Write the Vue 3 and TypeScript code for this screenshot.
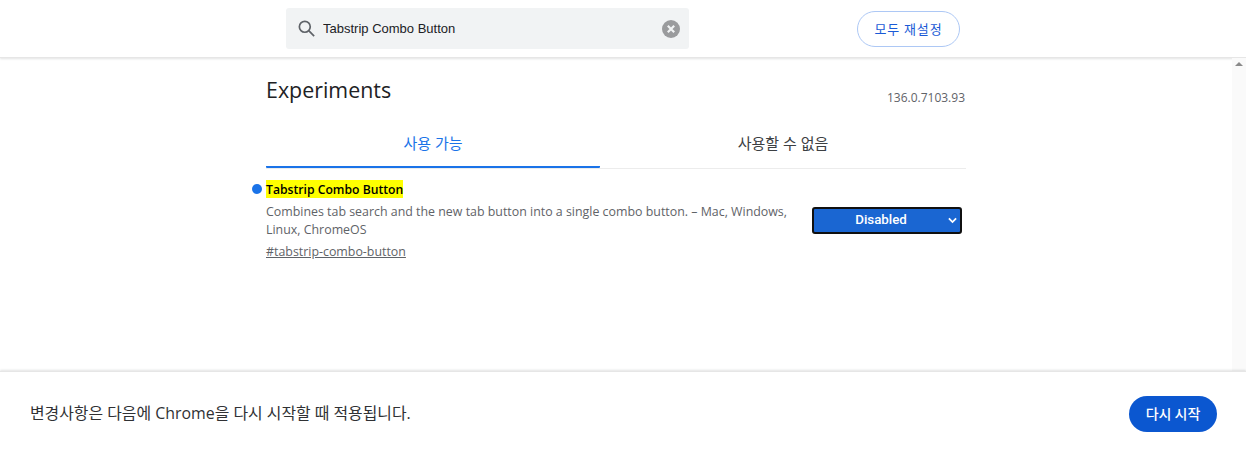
<script setup lang="ts">
import { ref } from 'vue'

const query = ref('Tabstrip Combo Button')
const state = ref('Disabled')
const states = ['Default', 'Enabled', 'Disabled']
</script>

<template>
  <div class="page">
    <header class="top">
      <div class="search">
        <svg class="search-icon" viewBox="0 0 20 20" fill="none" stroke="#5f6368" stroke-width="2">
          <circle cx="8" cy="8" r="6.4" />
          <path d="M12.6 12.6 19 19" />
        </svg>
        <input v-model="query" class="search-input" type="text" />
        <svg class="clear-icon" viewBox="0 0 18 18">
          <circle cx="9" cy="9" r="9" fill="#9a9b9d" />
          <path d="M5.8 5.8l6.4 6.4M12.2 5.8l-6.4 6.4" stroke="#f1f3f4" stroke-width="2.2" />
        </svg>
      </div>
      <button class="reset">모두 재설정</button>
    </header>

    <div class="middle">
      <main class="content">
        <div class="title-row">
          <h1 class="title">Experiments</h1>
          <span class="version">136.0.7103.93</span>
        </div>
        <div class="tabs">
          <div class="tab active">사용 가능</div>
          <div class="tab">사용할 수 없음</div>
        </div>
        <section class="flag">
          <div class="flag-text">
            <h2 class="flag-name"><span class="dot"></span><mark>Tabstrip Combo Button</mark></h2>
            <p class="flag-desc">Combines tab search and the new tab button into a single combo button. – Mac, Windows, Linux, ChromeOS</p>
            <a class="flag-link" href="#tabstrip-combo-button">#tabstrip-combo-button</a>
          </div>
          <div class="select-wrap">
            <select v-model="state" class="select">
              <option v-for="s in states" :key="s">{{ s }}</option>
            </select>
            <svg class="chevron" viewBox="0 0 10 7" fill="none" stroke="#fff" stroke-width="2">
              <path d="M1 1.2 5 5.2 9 1.2" />
            </svg>
          </div>
        </section>
      </main>
      <div class="scrollbar"><span class="arrow"></span></div>
    </div>

    <footer class="bottom">
      <span class="notice">변경사항은 다음에 Chrome을 다시 시작할 때 적용됩니다.</span>
      <button class="relaunch">다시 시작</button>
    </footer>
  </div>
</template>

<style>
html, body {
  margin: 0;
  background: #fff;
  overflow: hidden;
}
</style>

<style scoped>
.page {
  display: flex;
  flex-direction: column;
  width: 1246px;
  height: 456px;
  font-family: "Open Sans", "Noto Sans CJK KR", sans-serif;
  color: #202124;
}
.top {
  display: flex;
  align-items: center;
  flex: 0 0 58px;
  box-sizing: border-box;
  padding: 0 286px 0 286px;
  border-bottom: 1px solid #e6e6e6;
  box-shadow: 0 1px 2px rgba(60, 64, 67, 0.15);
  position: relative;
}
.search {
  display: flex;
  align-items: center;
  width: 403px;
  height: 41px;
  box-sizing: border-box;
  padding: 0 9px 0 12px;
  background: #f1f3f4;
  border-radius: 3px;
}
.search-icon {
  width: 17px;
  height: 17px;
  flex: none;
}
.search-input {
  flex: 1;
  min-width: 0;
  margin-left: 8px;
  padding: 0;
  border: none;
  outline: none;
  background: transparent;
  font: 13px "Liberation Sans", "Noto Sans CJK KR", sans-serif;
  color: #202124;
}
.clear-icon {
  width: 18px;
  height: 18px;
  flex: none;
}
.reset {
  margin-left: 168px;
  margin-top: 1px;
  width: 103px;
  height: 36px;
  flex: none;
  padding: 0 0 2px;
  border: 1px solid #adc8f5;
  border-radius: 18px;
  background: #fff;
  color: #1a5ad6;
  font: 13px "Noto Sans CJK KR", sans-serif;
  letter-spacing: 0.9px;
}
.middle {
  display: flex;
  flex: 1;
  min-height: 0;
  padding-left: 266px;
}
.content {
  width: 700px;
  flex: none;
}
.title-row {
  display: flex;
  justify-content: space-between;
  align-items: flex-start;
  height: 62px;
  box-sizing: border-box;
  padding-top: 17px;
}
.title {
  margin: 0;
  font-size: 21.4px;
  font-weight: 400;
  line-height: 30px;
  color: #202124;
}
.version {
  margin: 15px 1px 0 0;
  font-size: 12px;
  color: #5f6368;
  line-height: 16px;
}
.tabs {
  display: flex;
  height: 48px;
  border-bottom: 1px solid #ececec;
}
.tab {
  flex: 1;
  display: flex;
  align-items: center;
  justify-content: center;
  font-size: 15px;
  line-height: 20px;
  color: #3c4043;
  padding-bottom: 3px;
  box-sizing: border-box;
}
.tab.active {
  flex: 0 0 334px;
  color: #1a73e8;
  border-bottom: 2px solid #1a73e8;
  padding-bottom: 1px;
  border-radius: 0 0 1px 1px;
}
.flag {
  display: flex;
  justify-content: space-between;
  align-items: flex-start;
  padding-top: 12px;
}
.flag-text {
  width: 530px;
}
.flag-name {
  position: relative;
  margin: 0;
  font-size: 12.2px;
  font-weight: 600;
  line-height: 18px;
  color: #202124;
}
.flag-name mark {
  padding-top: 1px;
  background: #ffff00;
  color: #000;
}
.dot {
  position: absolute;
  left: -14px;
  top: 3px;
  width: 10px;
  height: 10px;
  border-radius: 50%;
  background: #1a73e8;
}
.flag-desc {
  margin: 4px 0 0;
  font-size: 12.4px;
  line-height: 18px;
  color: #5f6368;
}
.flag-link {
  display: block;
  margin-top: 4px;
  font-size: 12.4px;
  line-height: 18px;
  color: #5f6368;
}
.select-wrap {
  position: relative;
  width: 150px;
  height: 27px;
  margin: 26px 4px 0 0;
}
.select {
  appearance: none;
  width: 100%;
  height: 100%;
  box-sizing: border-box;
  padding: 0 12px 2px 0;
  border: 2px solid #101010;
  border-radius: 3px;
  background: #1a66d2;
  color: #fff;
  font: 500 13.3px Roboto, sans-serif;
  text-align: center;
  outline: none;
}
.chevron {
  position: absolute;
  right: 5px;
  top: 10px;
  width: 9px;
  height: 7px;
}
.scrollbar {
  position: relative;
  margin-left: auto;
  width: 14px;
  background: #fafafa;
}
.arrow {
  position: absolute;
  left: 3px;
  top: 4px;
  border-left: 4px solid transparent;
  border-right: 4px solid transparent;
  border-bottom: 4px solid #8a8a8a;
}
.bottom {
  display: flex;
  align-items: center;
  justify-content: space-between;
  flex: 0 0 85px;
  box-sizing: border-box;
  padding: 0 29px 0 30px;
  border-top: 1px solid #e6e6e6;
  box-shadow: 0 -1px 2px rgba(60, 64, 67, 0.15);
  background: #fff;
  position: relative;
}
.notice {
  font-size: 15.9px;
  line-height: 22px;
  margin-top: -2px;
  color: #303134;
}
.relaunch {
  width: 88px;
  height: 36px;
  padding: 0 0 2px;
  border: none;
  border-radius: 18px;
  background: #0b57d0;
  color: #fff;
  font: 500 14px "Noto Sans CJK KR", sans-serif;
}
</style>
